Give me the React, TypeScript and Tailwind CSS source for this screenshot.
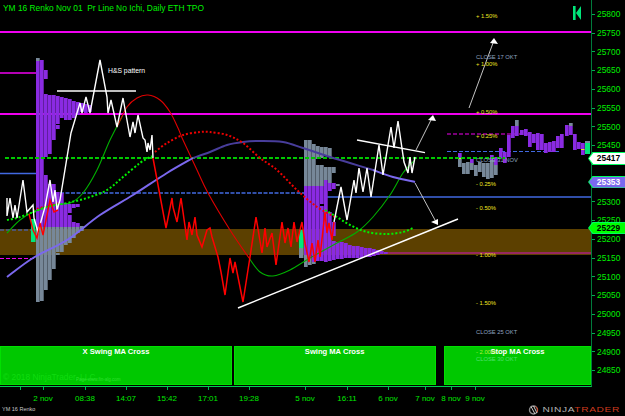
const PURPLE = '#8a2be2';
const GRAY = '#778899';
const TEAL = '#00e67a';

// [x, top, bottom, fill]
type Bar = [number, number, number, string];

const LEFT_PROFILE: Bar[] = [
  [36, 58, 61, GRAY], [36, 61, 227, PURPLE], [36, 227, 302, GRAY],
  [40, 60, 227, PURPLE], [40, 227, 301, GRAY],
  [44, 70, 79, PURPLE], [44, 94, 157, PURPLE], [44, 175, 227, PURPLE], [44, 227, 290, GRAY],
  [48, 95, 154, PURPLE], [48, 184, 227, PURPLE], [48, 227, 280, GRAY],
  [52, 95, 140, PURPLE], [52, 184, 227, PURPLE], [52, 227, 269, GRAY],
  [56, 96, 124, PURPLE], [56, 125, 129, PURPLE], [56, 192, 227, PURPLE], [56, 227, 252, GRAY], [56, 253, 255, GRAY],
  [60, 97, 118, PURPLE], [60, 193, 227, PURPLE], [60, 227, 252, GRAY],
  [64, 98, 120, PURPLE], [64, 203, 227, PURPLE], [64, 227, 245, GRAY],
  [68, 99, 120, PURPLE], [68, 204, 213, PURPLE], [68, 215, 227, PURPLE], [68, 227, 243, GRAY],
  [72, 101, 118, PURPLE], [72, 204, 208, PURPLE], [72, 222, 227, PURPLE], [72, 227, 238, GRAY],
  [76, 102, 115, PURPLE], [76, 204, 207, PURPLE], [76, 223, 227, PURPLE], [76, 227, 233, GRAY],
  [80, 103, 112, PURPLE], [80, 226, 231, GRAY],
  [84, 104, 113, PURPLE], [88, 105, 112, PURPLE],
];

const MID_PROFILE: Bar[] = [
  [304, 140, 186, GRAY], [304, 186, 255, PURPLE], [304, 255, 267, GRAY],
  [308, 140, 186, GRAY], [308, 186, 258, PURPLE], [308, 258, 265, GRAY],
  [312, 144, 186, GRAY], [312, 186, 262, PURPLE], [312, 262, 264, GRAY],
  [316, 146, 159, GRAY], [316, 165, 186, GRAY], [316, 186, 261, PURPLE],
  [320, 147, 158, GRAY], [320, 165, 186, GRAY], [320, 186, 204, PURPLE], [320, 206, 261, PURPLE],
  [324, 147, 156, GRAY], [324, 167, 180, GRAY], [324, 180, 262, PURPLE],
  [328, 148, 157, GRAY], [328, 167, 183, GRAY], [328, 183, 191, PURPLE], [328, 212, 261, PURPLE],
  [332, 167, 173, GRAY], [332, 183, 189, PURPLE], [332, 222, 236, PURPLE], [332, 241, 260, PURPLE],
  [336, 184, 186, GRAY], [336, 242, 259, PURPLE],
  [340, 242, 259, PURPLE], [344, 243, 258, PURPLE], [348, 245, 258, PURPLE], [352, 246, 258, PURPLE],
  [356, 246, 258, PURPLE], [360, 247, 258, PURPLE], [364, 248, 257, PURPLE], [368, 248, 257, PURPLE],
  [372, 249, 256, PURPLE], [376, 250, 255, PURPLE], [380, 251, 254, PURPLE], [384, 252, 254, PURPLE],
];

// top, bottom and where the colour changes for the candles on the right
const RIGHT_PROFILE: Bar[] = [
  [458, 153, 158, PURPLE], [458, 158, 167, GRAY], [462, 163, 174, GRAY], [466, 162, 174, GRAY],
  [470, 159, 163, PURPLE], [470, 163, 170, GRAY], [474, 165, 176, GRAY], [478, 162, 172, GRAY],
  [482, 163, 177, GRAY], [486, 163, 179, GRAY], [490, 155, 160, PURPLE], [490, 160, 178, GRAY],
  [494, 157, 165, PURPLE], [494, 165, 175, GRAY], [499, 148, 158, PURPLE], [503, 152, 163, PURPLE],
  [507, 135, 157, PURPLE], [511, 126, 138, PURPLE], [515, 120, 126, GRAY], [515, 126, 136, PURPLE],
  [520, 130, 135, PURPLE], [524, 129, 136, PURPLE], [528, 132, 147, PURPLE], [532, 134, 143, PURPLE],
  [536, 133, 150, PURPLE], [540, 134, 150, PURPLE], [544, 143, 153, PURPLE], [548, 142, 152, PURPLE],
  [552, 141, 152, PURPLE], [556, 136, 148, PURPLE], [560, 134, 148, PURPLE], [565, 125, 136, PURPLE],
  [569, 123, 126, GRAY], [569, 126, 135, PURPLE], [573, 134, 150, PURPLE], [577, 142, 149, PURPLE],
  [581, 143, 155, PURPLE],
];

const WHITE_LEFT = '7,198 7,216 10,198 13,218 15,205 17,218 23,180 27,212 33,205 34,218 38,232 45,207 50,180 53,202 55,190 57,210 60,200 71,133 80,103 82,113 86,97 90,113 100,60 107,97 108,113 111,100 117,127 123,98 130,137 133,122 135,133 138,115 143,138 145,140 147,152 148,143 150,150 152,135 153,158';
const RED_ZIG = '153,158 166,228 172,198 173,207 177,222 181,198 187,240 189,222 192,235 195,217 197,235 202,247 207,230 210,228 212,237 218,257 221,272 225,295 230,258 233,273 235,262 243,302 250,257 256,217 262,253 265,228 267,247 272,233 276,265 282,222 285,243 288,228 291,247 294,222 297,242 302,222 305,243 309,262 312,243 315,262 318,240 320,257 325,212 327,233 329,223 332,240 334,222';
const RED_LEFT = '29,214 33,230 37,238 40,223 43,235 45,225 50,200 54,212 58,210';
const WHITE_RIGHT = '334,222 341,187 347,220 354,180 356,193 359,168 363,192 367,168 371,197 379,145 383,175 391,127 394,148 398,121 404,162 408,173 410,157 412,173 415,157';
const GREEN_MA_1 = '7,233 20,220 33,212 53,205 70,203 83,193 97,170 110,140 123,115';
const GREEN_MA_2 = '249,258 260,272 273,276 290,270 310,258 337,243 357,232 373,217 390,195 403,173 415,160';
const RED_CURVE = '117,127 127,107 137,98 148,95 160,100 170,112 178,128 183,140 197,170 208,193 230,230 249,258';
const RED_DOTS = '155,152 167,143 183,135 200,132 210,132 227,135 243,143 260,158 277,170 297,190 317,207 335,217';
const RED_DOTS_LEFT = '33,210 43,207 60,203';
const GREEN_DOTS_1 = '7,220 20,217 47,207 67,203 87,198 107,190 123,177 140,163 152,156';
const GREEN_DOTS_2 = '325,210 337,217 350,225 367,232 387,234 403,232 413,228';
const MA_BRIGHT_L = '7,277 33,258 67,240 100,215 133,195 167,173 193,158';
const MA_DARK = '193,158 210,152 227,145 243,142 260,141 283,142 303,148 330,157 350,163 373,170';
const MA_BRIGHT_R = '373,170 393,177 415,182';

// 25400 and 25350 sit behind the price flags
const PRICES = ['25800', '25750', '25700', '25650', '25600', '25550', '25500', '25450', '', '', '25300', '25250', '25200', '25150', '25100', '25050', '25000', '24950', '24900', '24850'];

const X_LABELS = [
  { label: '', cls: 'ml-[10px]' },
  { label: '2 nov', cls: 'ml-[3px]' },
  { label: '08:38', cls: 'ml-[22px]' },
  { label: '14:07', cls: 'ml-[21px]' },
  { label: '15:42', cls: 'ml-[21px]' },
  { label: '17:01', cls: 'ml-[21px]' },
  { label: '19:28', cls: 'ml-[21px]' },
  { label: '5 nov', cls: 'ml-[36px]' },
  { label: '16:11', cls: 'ml-[22px]' },
  { label: '6 nov', cls: 'ml-[21px]' },
  { label: '7 nov', cls: 'ml-[17px]' },
  { label: '8 nov', cls: 'ml-[6px]' },
  { label: '9 nov', cls: 'ml-[4px]' },
];

const LEVELS = [
  { text: '+ 1.50%', cls: 'top-[12px] text-[#f0e820]' },
  { text: 'CLOSE 17 OKT', cls: 'top-[53px] text-[#8fa3c0]' },
  { text: '+ 1.00%', cls: 'top-[60px] text-[#f0e820]' },
  { text: '+ 0.50%', cls: 'top-[108px] text-[#f0e820]' },
  { text: '+ 0.25%', cls: 'top-[132px] text-[#f0e820]' },
  { text: 'CLOSE 31 NOV', cls: 'top-[156px] text-[#8fa3c0]' },
  { text: '- 0.25%', cls: 'top-[180px] text-[#f0e820]' },
  { text: '- 0.50%', cls: 'top-[204px] text-[#f0e820]' },
  { text: '- 1.00%', cls: 'top-[251px] text-[#f0e820]' },
  { text: '- 1.50%', cls: 'top-[299px] text-[#f0e820]' },
  { text: 'CLOSE 25 OKT', cls: 'top-[328px] text-[#8fa3c0]' },
  { text: '- 2.00%', cls: 'top-[348px] text-[#b8ee40]' },
  { text: 'CLOSE 30 OKT', cls: 'top-[355px] text-[#50e070]' },
];

// the moving averages are round in the picture, so turn their points into a spline
function smooth(points: string) {
  const p = points.split(' ').map((s) => s.split(',').map(Number));
  let d = `M${p[0][0]} ${p[0][1]}`;
  for (let i = 0; i < p.length - 1; i++) {
    const a = p[Math.max(i - 1, 0)];
    const b = p[i];
    const c = p[i + 1];
    const e = p[Math.min(i + 2, p.length - 1)];
    d += ` C${b[0] + (c[0] - a[0]) / 6} ${b[1] + (c[1] - a[1]) / 6} ${c[0] - (e[0] - b[0]) / 6} ${c[1] - (e[1] - b[1]) / 6} ${c[0]} ${c[1]}`;
  }
  return d;
}

function Bars({ data }: { data: Bar[] }) {
  return (
    <>
      {data.map(([x, y1, y2, fill], i) => (
        <rect key={i} x={x} y={y1} width={3.7} height={y2 - y1} fill={fill} />
      ))}
    </>
  );
}

function Chart() {
  return (
    <svg className="absolute inset-0" width={591} height={386} viewBox="0 0 591 386" fill="none">
      <rect x={0} y={229} width={591} height={26} fill="#5c4000" />

      <line x1={0} x2={591} y1={32} y2={32} stroke="#f000f0" strokeWidth={2} />
      <line x1={0} x2={591} y1={114} y2={114} stroke="#f000f0" strokeWidth={2} />
      <line x1={0} x2={36} y1={73} y2={73} stroke="#f000f0" strokeWidth={1.5} />
      <line x1={0} x2={36} y1={258.5} y2={258.5} stroke="#f000f0" strokeDasharray="4 2" />
      <line x1={0} x2={36} y1={173.5} y2={173.5} stroke="#4169e1" strokeWidth={1.5} />
      <line x1={0} x2={36} y1={230} y2={230} stroke="#4169e1" strokeWidth={1.2} strokeDasharray="4 2" />
      <line x1={60} x2={304} y1={193} y2={193} stroke="#4169e1" strokeWidth={1.5} strokeDasharray="4 1.5" />
      <line x1={325} x2={591} y1={197} y2={197} stroke="#4169e1" strokeWidth={1.5} />
      <line x1={447} x2={530} y1={134} y2={134} stroke="#f000f0" strokeWidth={1.2} strokeDasharray="4 2" />
      <line x1={447} x2={560} y1={151.5} y2={151.5} stroke="#4169e1" strokeWidth={1.2} strokeDasharray="4 2" />
      <line x1={385} x2={591} y1={253} y2={253} stroke="#d010c0" />

      <Bars data={LEFT_PROFILE} />
      <Bars data={MID_PROFILE} />
      <Bars data={RIGHT_PROFILE} />
      <rect x={31} y={219} width={4.5} height={23} fill={TEAL} />
      <rect x={299} y={230} width={4.5} height={18} fill={TEAL} />
      <rect x={299} y={248} width={4.5} height={10} fill={GRAY} />
      <rect x={585} y={141} width={5} height={13} fill={TEAL} />
      <rect x={585} y={141} width={5} height={2} fill={GRAY} />
      <rect x={581} y={149} width={3.4} height={1} fill="#e8e020" />
      <rect x={458} y={158} width={3.4} height={1} fill="#b8ee40" />

      <line x1={5} x2={505} y1={158} y2={158} stroke="#00c800" strokeWidth={2} strokeDasharray="4 2" />

      <path d={smooth(GREEN_MA_1)} stroke="#00b000" strokeWidth={1.1} />
      <path d={smooth(GREEN_MA_2)} stroke="#00b000" strokeWidth={1.1} />
      <path d={smooth(RED_CURVE)} stroke="#e00000" strokeWidth={1.1} />
      <path d={smooth(MA_BRIGHT_L)} stroke="#7b68ee" strokeWidth={2} />
      <path d={smooth(MA_DARK)} stroke="#483d9b" strokeWidth={2} />
      <path d={smooth(MA_BRIGHT_R)} stroke="#7b68ee" strokeWidth={2} />
      <path d={smooth(RED_DOTS)} stroke="#f00000" strokeWidth={2} strokeDasharray="2 2" />
      <path d={smooth(RED_DOTS_LEFT)} stroke="#f00000" strokeWidth={1.6} strokeDasharray="2 2" />
      <path d={smooth(GREEN_DOTS_1)} stroke="#00f000" strokeWidth={2} strokeDasharray="2 2" />
      <path d={smooth(GREEN_DOTS_2)} stroke="#00f000" strokeWidth={2} strokeDasharray="2 2" />

      <polyline points={WHITE_LEFT} stroke="#ffffff" strokeWidth={1.4} />
      <polyline points={RED_LEFT} stroke="#ff0000" strokeWidth={1.4} />
      <polyline points={RED_ZIG} stroke="#ff0000" strokeWidth={1.5} />
      <polyline points={WHITE_RIGHT} stroke="#ffffff" strokeWidth={1.4} />

      {/* hand drawn trend lines */}
      <line x1={57} x2={136} y1={91} y2={91} stroke="#ffffff" strokeWidth={1.4} />
      <line x1={238} x2={458} y1={308} y2={219} stroke="#ffffff" strokeWidth={1.5} />
      <line x1={357} x2={425} y1={140} y2={152.6} stroke="#ffffff" strokeWidth={1.4} />

      <line x1={469} x2={493} y1={108} y2={43} stroke="#c4c4c4" />
      <polygon points="494,38 498,44 490,43" fill="#ffffff" />
      <line x1={416} x2={431} y1={150} y2={120} stroke="#c4c4c4" />
      <polygon points="433,115 436,121 428,120" fill="#ffffff" />
      <line x1={415} x2={435} y1={183} y2={220} stroke="#c4c4c4" />
      <polygon points="438,225 431,222 438,219" fill="#ffffff" />

      {/* collapse marker top right */}
      <rect x={573} y={6} width={2.6} height={14} fill={TEAL} />
      <polygon points="581,6 581,20 576,13" fill={TEAL} />
    </svg>
  );
}

function Flag({ text, cls, fill }: { text: string; cls: string; fill: string }) {
  return (
    <div className={`absolute left-[588px] flex w-[37px] items-center bg-[#00ff60] pl-px [clip-path:polygon(0_50%,12%_0,100%_0,100%_100%,12%_100%)] ${cls}`}>
      <div className={`flex w-[36px] items-center justify-center pl-[3px] text-[8.4px] font-bold [clip-path:polygon(0_50%,12%_0,100%_0,100%_100%,12%_100%)] ${fill}`}>
        {text}
      </div>
    </div>
  );
}

function MaPanel({ title, cls }: { title: string; cls: string }) {
  return (
    <div className={`h-[39px] border border-[#00e000] bg-[#00c800] text-center text-[7.6px] font-bold leading-[9px] text-white ${cls}`}>
      {title}
    </div>
  );
}

export default function App() {
  return (
    <div className="relative flex h-[416px] w-[625px] flex-col overflow-hidden bg-black font-['Liberation_Sans',Arial,sans-serif]">
      <div className="flex h-[387px]">
        <div className="relative flex w-[592px] flex-col justify-between border-r border-b border-r-[#007a3c] border-b-[#00d050] pb-[1px]">
          <Chart />
          <div className="relative whitespace-pre pl-[3px] pt-[3px] text-[8.4px] leading-[10px] text-[#00f000]">
            YM 16 Renko Nov 01  Pr Line No Ichi, Daily ETH TPO
          </div>

          <div className="relative flex justify-between">
            <MaPanel title="X Swing MA Cross" cls="w-[232px]" />
            <MaPanel title="Swing MA Cross" cls="w-[202px]" />
            <div className="h-[39px] w-[5px] bg-black" />
            <MaPanel title="Stop MA Cross" cls="w-[147px]" />
            <div className="absolute bottom-[3px] left-[3px] text-[8.4px] leading-[9px] text-[#10dc10]">© 2018 NinjaTrader, LLC</div>
            <div className="absolute bottom-[2px] left-[76px] text-[4.5px] leading-[6px] text-[#30e030]">Page www.fin-alg.com</div>
          </div>

          <div className="absolute left-[108px] top-[67px] text-[6.8px] leading-[8px] text-white">H&amp;S pattern</div>
          {LEVELS.map((l) => (
            <div key={l.text} className={`absolute left-[476px] whitespace-nowrap text-[5.8px] leading-[8px] ${l.cls}`}>
              {l.text}
            </div>
          ))}
        </div>

        <div className="flex flex-1 flex-col pt-[5px]">
          {PRICES.map((p, i) => (
            <div key={i} className="flex h-[18.75px] items-center gap-[2px]">
              <span className="h-px w-[3px] bg-[#00b050]" />
              <span className="text-[8.4px] leading-none text-[#00f000]">{p}</span>
            </div>
          ))}
        </div>
      </div>

      <div className="flex h-[17px] text-[8px] leading-[10px] text-[#00e800]">
        {X_LABELS.map((x, i) => (
          <div key={i} className={`flex w-[20px] flex-col items-center gap-[4px] whitespace-nowrap ${x.cls}`}>
            <span className="h-[3px] w-px bg-[#00b050]" />
            <span>{x.label}</span>
          </div>
        ))}
      </div>

      <div className="flex flex-1 items-center justify-between pl-[2px] pr-[5px]">
        <span className="text-[5.5px] leading-none text-[#c8c8c8]">YM 16 Renko</span>
        <div className="flex items-center">
          <svg className="mr-[19px]" width={12} height={10} viewBox="0 0 12 10" fill="none">
            <circle cx={5.5} cy={5} r={4} stroke="#8a8a8a" strokeWidth={1.4} />
            <path d="M3 1.5 L7 9 M5.5 1 L9 8" stroke="#d0d0d0" strokeWidth={1} />
            <path d="M7.5 1.5 A4 4 0 0 1 9 7" stroke="#d84020" strokeWidth={1} />
          </svg>
          <span className="origin-right scale-x-[1.27] whitespace-nowrap text-[8px] leading-none tracking-[0.5px] text-[#b4b4b4]">
            NINJA<span className="text-[#cc3a1e]">TRADER</span>
          </span>
        </div>
      </div>

      <Flag text="25417" cls="top-[152px] h-[13px]" fill="h-[11px] bg-white text-black" />
      <Flag text="25353" cls="top-[176px] h-[12px]" fill="h-[11px] bg-[#7b68ee] text-white" />
      <Flag text="25229" cls="top-[222px] h-[12px]" fill="h-[10px] bg-[#00ff00] text-black" />
    </div>
  );
}
